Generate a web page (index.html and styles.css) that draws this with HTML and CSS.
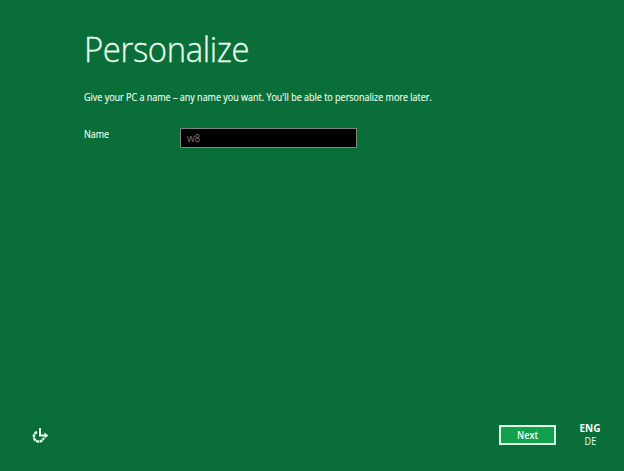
FILE: index.html
```html
<!DOCTYPE html>
<html lang="en">
<head>
<meta charset="utf-8">
<title>Personalize</title>
<link rel="stylesheet" href="styles.css">
</head>
<body>
<main class="setup">
  <section class="content">
    <h1 class="title">Personalize</h1>
    <p class="intro">Give your PC a name – any name you want. You'll be able to personalize more later.</p>
    <div class="field">
      <label class="label" for="pc-name"><span class="condensed">Name</span></label>
      <input class="input" id="pc-name" type="text" value="w8">
    </div>
  </section>
  <footer class="footer">
    <svg class="access" width="18" height="18" viewBox="0 0 18 18" aria-hidden="true">
      <path class="ring" d="M6 5A5 5 0 1 0 12.6 11.2"/>
      <path class="hands" d="M9 1V8.5H14"/>
      <path class="head" d="M13.4 5.6L17.4 8.5L13.4 11.4Z"/>
    </svg>
    <button class="next" type="button"><span class="condensed">Next</span></button>
    <div class="language"><strong>ENG</strong><span class="condensed">DE</span></div>
  </footer>
</main>
</body>
</html>
```
FILE: styles.css
```css
* { box-sizing: border-box; }
body {
  margin: 0;
  background: #0a6e39;
  color: #e9fff0;
  font-family: "Open Sans", "Noto Sans", sans-serif;
  font-size: 10px;
}
.setup {
  height: 471px;
  display: flex;
  flex-direction: column;
  justify-content: space-between;
}
.content { padding: 24px 0 0 84px; }
.condensed { display: inline-block; transform: scaleX(.91); }
.label .condensed { transform-origin: left; transform: scaleX(.9); }
.title {
  margin: 0;
  font-size: 35px;
  font-weight: 300;
  line-height: 50px;
  letter-spacing: -0.4px;
  -webkit-text-stroke: 0.3px #e9fff0;
  transform: scaleX(.938);
  transform-origin: left;
}
.intro {
  margin: 16px 0 0;
  line-height: 14px;
  white-space: nowrap;
  -webkit-text-stroke: 0.15px #e9fff0;
  transform: scaleX(.898);
  transform-origin: left;
}
.field {
  display: flex;
  margin-top: 24px;
}
.label {
  width: 96px;
  line-height: 13px;
  -webkit-text-stroke: 0.15px #e9fff0;
}
.input {
  width: 177px;
  height: 20px;
  padding: 0 6px;
  border: 1px solid #7d867f;
  border-radius: 0;
  outline: 0;
  background: #000;
  color: #777;
  font: inherit;
  letter-spacing: -0.3px;
}
.footer {
  display: flex;
  align-items: flex-start;
  height: 49px;
  padding: 3px 0 0 31px;
}
.access {
  margin-top: 2px;
  fill: none;
  stroke: #e9fff0;
}
.ring { stroke-width: 2.5; stroke-dasharray: 3 0.6; }
.hands { stroke-width: 2; }
.head { fill: #e9fff0; stroke: none; }
.next {
  width: 57px;
  height: 20px;
  margin-left: 450px;
  padding: 0;
  border: 2px solid #dcf8e4;
  background: #10a14f;
  color: #fff;
  font: 600 10px/16px "Open Sans", sans-serif;
}
.language {
  display: flex;
  flex-direction: column;
  align-items: center;
  width: 30px;
  margin-left: 19px;
  margin-top: -3px;
  line-height: 13px;
}
.language strong { color: #fff; font-size: 10px; }
```
